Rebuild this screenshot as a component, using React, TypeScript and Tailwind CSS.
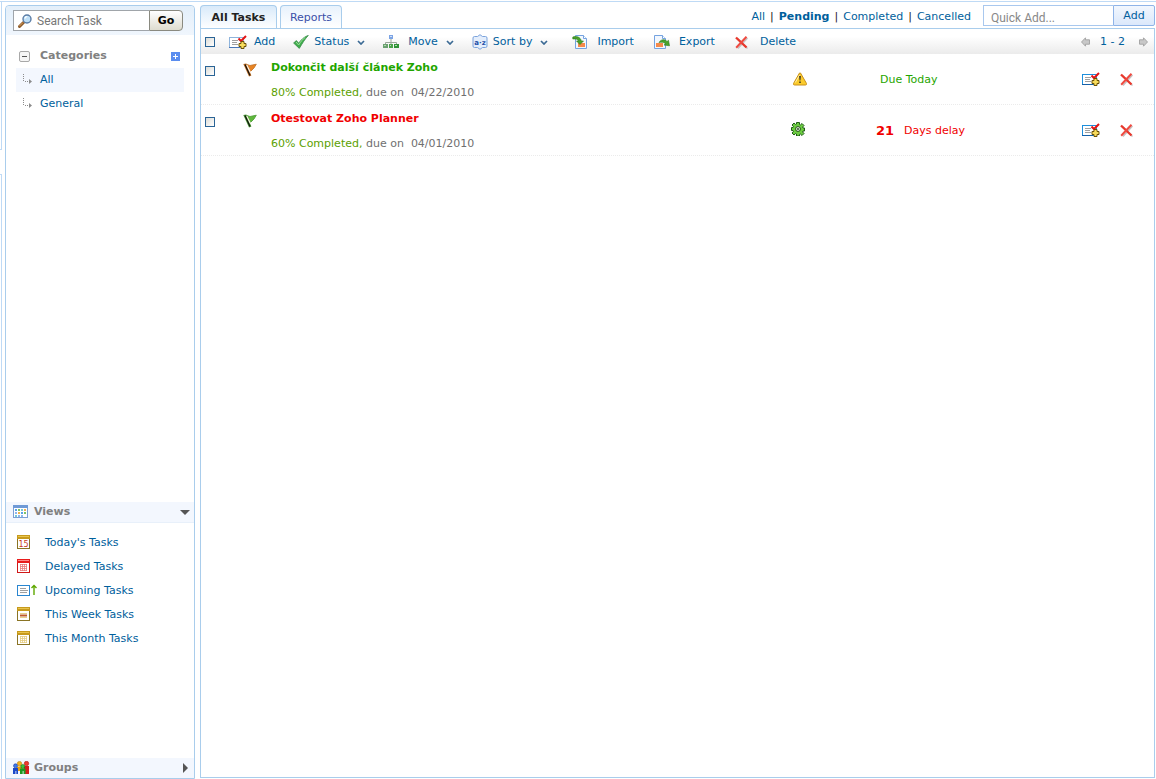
import type { ReactNode } from "react";

interface Task {
  id: number;
  title: string;
  completed: string;
  due: string;
  flag: "orange" | "green";
  state: "warning" | "progress";
  delay: number;
}

const tasks: Task[] = [
  { id: 1, title: "Dokončit další článek Zoho", completed: "80%", due: "04/22/2010", flag: "orange", state: "warning", delay: 0 },
  { id: 2, title: "Otestovat Zoho Planner", completed: "60%", due: "04/01/2010", flag: "green", state: "progress", delay: 21 },
];

const views = [
  { label: "Today's Tasks", icon: <CalendarIcon kind="today" /> },
  { label: "Delayed Tasks", icon: <CalendarIcon kind="delayed" /> },
  { label: "Upcoming Tasks", icon: <UpcomingIcon /> },
  { label: "This Week Tasks", icon: <CalendarIcon kind="week" /> },
  { label: "This Month Tasks", icon: <CalendarIcon kind="month" /> },
];

/* ---------- icons ---------- */

function SearchIcon() {
  return (
    <svg className="shrink-0" width="14" height="14" viewBox="0 0 14 14" fill="none">
      <path d="M1.5 12.5 5.5 8.5" stroke="#8a5a2b" strokeWidth="3" strokeLinecap="round" />
      <path d="M1.5 12 4.8 8.7" stroke="#e8a860" strokeWidth="1" strokeLinecap="round" />
      <circle cx="9" cy="5" r="4" fill="#bfe0f8" stroke="#5b7da6" strokeWidth="1.4" />
      <path d="M6.8 4.6c.3-1.2 1.2-1.9 2.4-1.9" stroke="#fff" strokeWidth="1.2" />
    </svg>
  );
}

function BranchIcon() {
  return (
    <svg width="10" height="12" viewBox="0 0 10 12" fill="none">
      <path d="M1.5 0v8M3 7.5h4" stroke="#8c8c8c" strokeDasharray="1 1" />
      <path d="M7 5v5l3-2.5z" fill="#8c8c8c" />
    </svg>
  );
}

function TaskIcon({ muted = false }: { muted?: boolean }) {
  return (
    <svg width="18" height="14" viewBox="0 0 18 14" fill="none">
      <rect x=".5" y="2.5" width="14" height="10" fill="#fff" stroke={muted ? "#8fb4dc" : "#1d8fdc"} />
      <path d="M0 12.5h11" stroke={muted ? "#4a78b8" : "#1560a8"} />
      <path d="M3 5.5h6M3 7.5h5M3 9.5h6" stroke="#a0a0a0" />
      <path d="m9.5 3.5 2.5 2.5L17 1" stroke="#e31414" strokeWidth="2" />
      <path d="M12 6.5h3v2h2v3h-2v2h-3v-2h-2v-3h2z" fill="#f8dc5c" stroke="#6b5208" />
    </svg>
  );
}

function CheckIcon() {
  return (
    <svg width="16" height="14" viewBox="0 0 16 14">
      <path d="M.6 8 3.4 5.6l2.3 2.6C8 4.8 11 1.8 15.3.4 12 4 9.5 8 6.3 13.4z" fill="#3fae4c" stroke="#3a8a4a" strokeWidth=".8" strokeLinejoin="round" />
      <path d="M3 7 5.7 10C7.5 6.8 9.5 4.4 12.2 2.4" fill="none" stroke="#9be09a" strokeWidth="1" />
    </svg>
  );
}

function MoveIcon() {
  return (
    <svg width="16" height="14" viewBox="0 0 16 14">
      <path d="M8 4v6M2.5 10V7.5h11V10" fill="none" stroke="#9aa89a" />
      <rect x="6" y="0" width="4" height="4" fill="#7ba3e4" />
      <rect x="0" y="9" width="5" height="4" fill="#6aa070" />
      <rect x="6" y="9" width="4" height="4" fill="#4ba34b" />
      <rect x="11" y="9" width="5" height="4" fill="#2f9237" />
      <path d="M1 10.5h2M7 10.5h1M12 10.5h2" stroke="#b4dcb0" />
      <path d="M7 1.5h2" stroke="#d0e0fa" />
    </svg>
  );
}

function SortIcon() {
  return (
    <svg width="16" height="16" viewBox="0 0 16 16">
      <path d="M2.5 2.5h3L8 .7l2.5 1.8h3q1.500 0 1.500 1.500v8q0 1.500-1.500 1.500h-3L8 15.300 5.500 13.500h-3Q1 13.500 1 12V4q0-1.500 1.500-1.500z" fill="#e4eefc" stroke="#7ba3dc" />
      <text x="8" y="10.5" textAnchor="middle" fontSize="7" fontWeight="bold" fill="#2450a8">a·z</text>
    </svg>
  );
}

function TransferIcon({ out = false }: { out?: boolean }) {
  return (
    <svg width="17" height="16" viewBox="0 0 17 16">
      <path d={out ? "M.5 1.5h8l3 3v10H.5z" : "M3.5 1.5h8l3 3v10h-11z"} fill="#f2f7fe" stroke="#75a3e0" />
      <path d={out ? "M8.5 1.5v3h3" : "M11.5 1.5v3h3"} fill="#fff" stroke="#75a3e0" />
      <rect x={out ? 2 : 6} y="9" width="7" height="4" fill="#f58a4b" />
      {out ? (
        <path d="M5 8.5C7 5 11 5 13 7.5l1.5-1.2 1 5.5-5.5-.8 1.5-1.2C9.500 8 7.500 8 5 8.500z" fill="#4aa32a" stroke="#2c7a1c" strokeWidth=".6" />
      ) : (
        <path d="M.8 3C4.5 1.800 8.500 3 9.300 7h2.200L8 10.500 4.500 7h2C6 5 4 4.800.8 5z" fill="#4aa32a" stroke="#2c7a1c" strokeWidth=".6" />
      )}
    </svg>
  );
}

function DeleteIcon() {
  return (
    <svg width="14" height="13" viewBox="0 0 14 13" fill="none">
      <path d="m2.5 2.5 10 10M12.5 2l-9.500 10.500" stroke="#c4c4c4" strokeWidth="1.5" />
      <path d="M1 1.5 11.5 11.5" stroke="#e8382c" strokeWidth="2.4" />
      <path d="M11.5 .8 1.2 11.8" stroke="#ee4a40" strokeWidth="2" />
    </svg>
  );
}

function ChevronIcon() {
  return (
    <svg width="8" height="6" viewBox="0 0 8 6" fill="none">
      <path d="m1 2 3 3 3-3" stroke="#3b6a94" strokeWidth="1.7" />
    </svg>
  );
}

function PageArrow({ next = false }: { next?: boolean }) {
  return (
    <svg width="9" height="10" viewBox="0 0 9 10">
      <path
        d={next ? "M8.5 5 4.5.8v2H.5v4.4h4v2z" : "M.5 5l4-4.2v2h4v4.4h-4v2z"}
        fill="#c8c8c8"
        stroke="#a0a0a0"
        strokeWidth=".9"
      />
    </svg>
  );
}

function FlagIcon({ color }: { color: Task["flag"] }) {
  const fill = color === "orange" ? "#e88424" : "#5fb83c";
  const edge = color === "orange" ? "#c07024" : "#4a9a34";
  return (
    <svg width="14" height="14" viewBox="0 0 14 14">
      <path d="M4 1.5 7 2.5 13.3 1.2 11 5 7.5 8.5z" fill={fill} stroke={edge} strokeWidth=".8" />
      <path d="M.3 1 3.4.4 8.400 12.400 6 13.400z" fill={edge} />
      <path d="M2 1.400 7 12.400" stroke="#111" strokeWidth="1.2" />
      <path d="M3.8 2 7.6 9.8" stroke="#fff6e8" strokeWidth="1.1" />
    </svg>
  );
}

function WarningIcon() {
  return (
    <svg width="18" height="14" viewBox="0 0 18 14">
      <path d="M9.5 1q.5-.7 1 0l6 10.5q.3 1.500-1 1.500h-11q-1.300 0-1-1.500z" fill="#fbcb2c" stroke="#c8901c" />
      <path d="m9.5 3.2-4.2 7.3" stroke="#fff0a8" />
      <path d="M9.2 4h1.6l-.4 4.5h-.8zM9.3 9.5h1.4V11H9.3z" fill="#222" />
    </svg>
  );
}

function GearIcon() {
  return (
    <svg className="-mt-[3px]" width="18" height="14" viewBox="0 0 18 14">
      <path
        d="M6.5.5h3v2l1 .4 1.500-1.400 2 2-1.400 1.500.4 1h1.500v3H13l-.4 1 1.400 1.500-2 2-1.500-1.400-1 .4v1.500h-3V12l-1-.4L4 13l-2-2 1.400-1.500-.4-1H1.500v-3H3l.4-1L2 3l2-2 1.500 1.400 1-.4z"
        fill="#6ccc40"
        stroke="#1f5c16"
        strokeLinejoin="round"
      />
      <circle cx="8" cy="7" r="2.4" fill="#f0f8ea" stroke="#1f4a14" />
      <circle cx="8" cy="7" r=".9" fill="#173f10" />
    </svg>
  );
}

function CalendarIcon({ kind }: { kind: "today" | "delayed" | "week" | "month" }) {
  const red = kind === "delayed";
  return (
    <svg width="14" height="14" viewBox="0 0 14 14">
      <rect x=".5" y=".5" width="12" height="13" fill="#fff" stroke={red ? "#d01818" : "#8a7424"} />
      <rect x="0" y="0" width="13" height="4" fill={red ? "#e81c1c" : "#c79a1c"} />
      <path d="M1 1.5h11" stroke={red ? "#ff8a8a" : "#e8c44c"} />
      {kind === "today" && (
        <text x="6.5" y="11.8" textAnchor="middle" fontSize="8" fill="#c83c1c">15</text>
      )}
      {kind === "delayed" && (
        <path d="M3 5.5h7M3 7.5h7M3 9.5h7M3 11.5h7M3.5 5v7M5.5 5v7M7.5 5v7M9.5 5v7" stroke="#e87878" strokeWidth=".8" />
      )}
      {kind === "week" && (
        <>
          <path d="M3 6.5h7M3 10.5h7" stroke="#e6cf8c" />
          <path d="M3 8.5h7" stroke="#c05a2c" strokeWidth="2" />
        </>
      )}
      {kind === "month" && (
        <path d="M3 5.5h7M3 7.5h7M3 9.5h7M3 11.5h7M3.5 5v7M5.5 5v7M7.5 5v7M9.5 5v7" stroke="#e4cc80" strokeWidth=".8" />
      )}
    </svg>
  );
}

function UpcomingIcon() {
  return (
    <svg width="20" height="14" viewBox="0 0 20 14" fill="none">
      <rect x=".5" y="2.5" width="12" height="10" fill="#fff" stroke="#2a86d0" />
      <path d="M3 5.5h6M3 7.5h8M3 9.5h7" stroke="#a0a0a0" />
      <path d="M17 12V2M14.5 5 17 2.5 19.5 5" stroke="#5fa800" strokeWidth="1.4" />
    </svg>
  );
}

function ViewsIcon() {
  return (
    <svg width="16" height="14" viewBox="0 0 16 14">
      <rect x=".5" y=".5" width="14" height="12" fill="#fff" stroke="#7b9fd4" />
      <rect x="0" y="0" width="15" height="3" fill="#6f9ad6" />
      <path d="M2 4h2v2H2zM8 7h2v2H8z" fill="#5aa0e8" />
      <path d="M5 4h2v2H5zM11 7h2v2h-2z" fill="#7cc46a" />
      <path d="M8 4h2v2H8zM2 10h2v2H2z" fill="#74c8d8" />
      <path d="M11 4h2v2h-2zM5 7h2v2H5z" fill="#f0b050" />
      <path d="M2 7h2v2H2zM5 10h2v2H5zM8 10h2v2H8z" fill="#8cb8ec" />
    </svg>
  );
}

function GroupsIcon() {
  return (
    <svg width="17" height="14" viewBox="0 0 17 14">
      <path d="M4 5.5h5V10H4z" fill="#e8a010" />
      <circle cx="6.5" cy="2.6" r="2.2" fill="#f4b41c" stroke="#b87808" strokeWidth=".6" />
      <path d="M11 5h5v8h-5z" fill="#d41c1c" />
      <circle cx="13.5" cy="2.5" r="2.2" fill="#ee3c2c" stroke="#a81010" strokeWidth=".6" />
      <path d="M0 7h5v6H3.3v-3h-.8v3H0z" fill="#1c48c8" />
      <circle cx="2.5" cy="4.8" r="2" fill="#3c78ec" stroke="#1c3c98" strokeWidth=".6" />
      <path d="M7 7.5h5.5V13H10.5v-3h-.8v3H7z" fill="#1c9820" />
      <circle cx="9.8" cy="5.5" r="2" fill="#3cc43c" stroke="#107010" strokeWidth=".6" />
    </svg>
  );
}

/* ---------- parts ---------- */

function Checkbox({ label }: { label: string }) {
  return (
    <input
      type="checkbox"
      aria-label={label}
      className="block size-[10px] shrink-0 appearance-none border border-[#2a6496] bg-linear-to-br from-[#dcdcd7] to-white checked:bg-[#1c5180]"
    />
  );
}

interface ToolButtonProps {
  icon: ReactNode;
  label: string;
  menu?: boolean;
  tight?: boolean;
}

function ToolButton({ icon, label, menu = false, tight = false }: ToolButtonProps) {
  return (
    <button type="button" className="flex items-center">
      <span className={`flex ${tight ? "w-[21px]" : "w-[25px]"}`}>{icon}</span>
      <span>{label}</span>
      {menu && <span className="ml-2"><ChevronIcon /></span>}
    </button>
  );
}

function Sidebar() {
  return (
    <aside className="mt-[3px] flex w-[190px] shrink-0 flex-col rounded-t border border-[#a9cdec]">
      <form className="flex h-[29px] items-center rounded-t bg-linear-to-b from-[#e3effa] to-[#f0f6fd] px-[7px]">
        <label className="flex h-[21px] min-w-0 flex-1 items-center gap-[5px] border border-r-0 border-[#a0a5aa] bg-white pl-1">
          <SearchIcon />
          <input
            type="text"
            aria-label="Search Task"
            placeholder="Search Task"
            className="w-full min-w-0 font-[Roboto,sans-serif] text-[12px] outline-none placeholder:text-[#777]"
          />
        </label>
        <button type="button" className="mr-1 h-[21px] w-[34px] rounded-r-sm border border-[#8a8a80] bg-linear-to-b from-white to-[#dedcd0] font-bold text-black">
          Go
        </button>
      </form>

      <div className="flex-1 px-[10px] pt-[9px]">
        <div className="flex h-6 items-center pr-1 pl-[3px]">
          <button type="button" aria-label="Collapse categories" className="flex size-[11px] items-center justify-center rounded-xs border border-[#a8a8a8] bg-[#f6f6f6]">
            <span className="h-px w-[5px] bg-[#555]" />
          </button>
          <h2 className="ml-[10px] flex-1 font-bold text-[#808080]">Categories</h2>
          <button type="button" aria-label="Add category" className="flex size-[9px] items-center justify-center bg-[#5b8def]">
            <svg width="5" height="5" viewBox="0 0 5 5"><path d="M2.5 0v5M0 2.5h5" stroke="#fff" /></svg>
          </button>
        </div>
        <ul>
          <li className="flex h-6 items-center gap-2 bg-[#f3f7fe] pl-[6px]">
            <BranchIcon />
            <a href="#all">All</a>
          </li>
          <li className="flex h-6 items-center gap-2 pl-[6px]">
            <BranchIcon />
            <a href="#general">General</a>
          </li>
        </ul>
      </div>

      <button type="button" className="flex h-[21px] items-center border-b border-[#e8f0fa] bg-[#f3f7fe] pr-1 pl-[7px] font-bold text-[#808080]">
        <ViewsIcon />
        <span className="ml-[5px] flex-1 text-left">Views</span>
        <svg width="10" height="5" viewBox="0 0 10 5"><path d="M0 0h10L5 5z" fill="#555" /></svg>
      </button>
      <ul className="h-[235px] pt-2 pl-[11px]">
        {views.map((view) => (
          <li key={view.label} className="flex h-6 items-center">
            <span className="w-7 pb-[2px]">{view.icon}</span>
            <a href="#view">{view.label}</a>
          </li>
        ))}
      </ul>
      <button type="button" className="flex h-5 items-center bg-[#f3f7fe] pr-[6px] pl-[7px] font-bold text-[#808080]">
        <GroupsIcon />
        <span className="ml-1 flex-1 text-left">Groups</span>
        <svg width="5" height="10" viewBox="0 0 5 10"><path d="M0 0v10l5-5z" fill="#555" /></svg>
      </button>
    </aside>
  );
}

function TaskRow({ task }: { task: Task }) {
  const late = task.delay > 0;
  return (
    <li className="flex h-[51px] items-center border-b border-dotted border-[#ebebeb] pl-1">
      <div className="flex flex-1 items-start">
        <div className="pt-3"><Checkbox label={task.title} /></div>
        <div className="pt-[9px] pl-7"><FlagIcon color={task.flag} /></div>
        <div className="pt-px pl-[14px]">
          <h3 className={`leading-[26px] font-bold ${late ? "text-[#f00000]" : "text-[#1fa500]"}`}>{task.title}</h3>
          <p className="leading-6 text-[#707070]">
            <span className="text-[#5c9f00]">{task.completed} Completed,</span> due on&nbsp; {task.due}
          </p>
        </div>
      </div>
      <div className="w-[86px]">{task.state === "warning" ? <WarningIcon /> : <GearIcon />}</div>
      <div className="w-[206px] pt-[2px]">
        {late ? (
          <p className="flex items-center gap-[10px] text-[#f00000]">
            <span className="text-[13px] font-bold">{task.delay}</span>
            Days delay
          </p>
        ) : (
          <p className="pl-1 text-[#1fa500]">Due Today</p>
        )}
      </div>
      <div className="flex w-[72px] items-center gap-5">
        <button type="button" aria-label="Edit task"><TaskIcon /></button>
        <button type="button" aria-label="Delete task"><DeleteIcon /></button>
      </div>
    </li>
  );
}

export default function App() {
  return (
    <div className="flex min-h-screen flex-col bg-white pt-px font-['Verdana','DejaVu_Sans',sans-serif] text-[11px] leading-4 text-[#00609c]">
      <div className="flex flex-1 border-t border-[#bfdaf5]">
        <div className="mr-[3px] flex w-[2px] flex-col gap-6">
          <div className="h-[148px] border-r border-b border-[#bfdaf5]" />
          <div className="flex-1 border-t border-r border-[#bfdaf5]" />
        </div>

        <Sidebar />

        <main className="mt-[3px] mr-px mb-px ml-[5px] flex min-w-0 flex-1 flex-col">
          <div className="flex h-[23px] items-end">
            <button type="button" className="-mb-px h-6 w-[77px] shrink-0 rounded-t border border-b-0 border-[#a9cdec] bg-linear-to-b from-[#d9eafa] to-white font-bold text-[#222]">
              All Tasks
            </button>
            <button type="button" className="ml-[3px] h-[23px] w-[62px] shrink-0 rounded-t border border-b-0 border-[#a9cdec] bg-linear-to-b from-[#e8f2fc] to-white pt-[2px] text-[#3a4fa8]">
              Reports
            </button>
            <nav className="mr-3 ml-auto flex h-[23px] items-center gap-[5px]">
              <a href="#all">All</a>
              <span className="text-[#222]">|</span>
              <a href="#pending" className="font-bold">Pending</a>
              <span className="text-[#222]">|</span>
              <a href="#completed">Completed</a>
              <span className="text-[#222]">|</span>
              <a href="#cancelled">Cancelled</a>
            </nav>
            <form className="mb-[2px] flex h-[21px]">
              <input
                type="text"
                aria-label="Quick Add"
                placeholder="Quick Add..."
                className="w-[130px] border border-r-0 border-[#a9c8ee] px-[7px] pt-1 font-[Roboto,sans-serif] text-[12px] outline-none placeholder:text-[#888]"
              />
              <button type="button" className="w-[42px] rounded-r-xs border border-[#8fb4e8] bg-linear-to-b from-[#f2f7fe] to-[#dbe8fb] pt-px">
                Add
              </button>
            </form>
          </div>

          <section className="flex-1 border border-[#a9cdec]">
            <div className="flex h-[25px] items-center bg-linear-to-b from-white from-30% to-[#ebebeb] pt-px pl-1">
              <Checkbox label="Select all tasks" />
              <div className="ml-[14px] flex items-center gap-[18px]">
                <ToolButton icon={<TaskIcon muted />} label="Add" />
                <ToolButton icon={<CheckIcon />} label="Status" menu tight />
                <ToolButton icon={<MoveIcon />} label="Move" menu />
                <ToolButton icon={<SortIcon />} label="Sort by" menu tight />
              </div>
              <div className="ml-6 flex items-center gap-5">
                <ToolButton icon={<TransferIcon />} label="Import" />
                <ToolButton icon={<TransferIcon out />} label="Export" />
                <ToolButton icon={<DeleteIcon />} label="Delete" />
              </div>
              <div className="mr-[6px] ml-auto flex items-center gap-[10px]">
                <button type="button" aria-label="Previous page"><PageArrow /></button>
                <span className="mr-1">1 - 2</span>
                <button type="button" aria-label="Next page"><PageArrow next /></button>
              </div>
            </div>
            <ul>
              {tasks.map((task) => (
                <TaskRow key={task.id} task={task} />
              ))}
            </ul>
          </section>
        </main>
      </div>
    </div>
  );
}
